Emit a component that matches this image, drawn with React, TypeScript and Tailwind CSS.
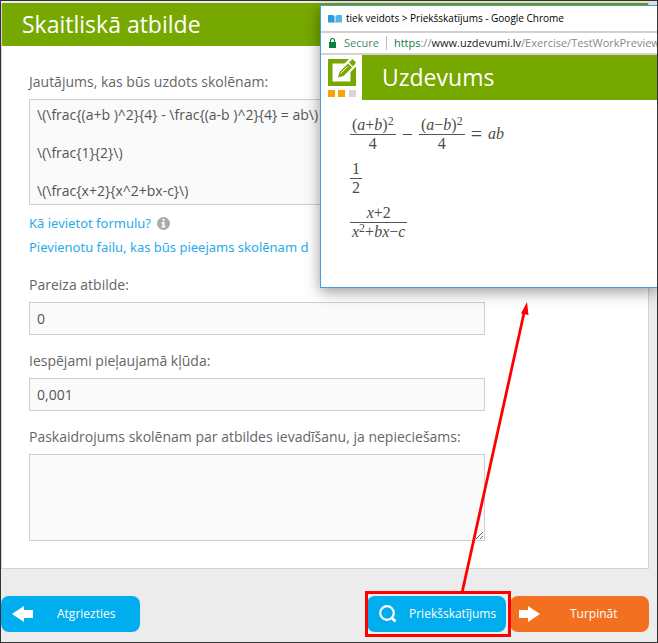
import { useState, type ReactNode } from 'react';

const QUESTION = `\\(\\frac{(a+b )^2}{4} - \\frac{(a-b )^2}{4} = ab\\)

\\(\\frac{1}{2}\\)

\\(\\frac{x+2}{x^2+bx-c}\\)`;

const FIELD = 'block w-full border border-[#cfcfcf] bg-[#fafafa] px-[7px] text-sm text-[#555] outline-none';
const BUTTON = 'flex h-9 w-[139px] items-center rounded-lg text-xs text-white';

function Frac({ top, bottom }: { top: ReactNode; bottom: ReactNode }) {
  return (
    <span className="inline-flex flex-col items-center">
      <span className="h-[19px] px-0.5 leading-[19px]">{top}</span>
      <span className="w-full border-t border-[#555]" />
      <span className="h-[18px] px-0.5 leading-[18px]">{bottom}</span>
    </span>
  );
}

function Square() {
  return <sup className="relative -top-[5px] text-xs leading-none align-baseline">2</sup>;
}

function Logo() {
  return (
    <svg width="28" height="38" viewBox="0 0 28 38" aria-hidden="true">
      <path d="M0 0h21l-4.500 4.500H4.500v18h18V13l5.500-5.500V27H0z" fill="#76a800" />
      <path d="M10 18.500l1.500-5.500L20 4.500l4 4L15.500 17z" fill="#76a800" />
      <path d="M21 3.500L24.500 0 28 3.500 25 7.500z" fill="#76a800" />
      <path d="M12.500 14.500l7-7" stroke="#fff" />
      <path d="M0 31h7v7H0zM10 31h7v7h-7z" fill="#f7a30a" />
      <path d="M21 31h7v7h-7z" fill="#d6d6d6" />
    </svg>
  );
}

function PreviewWindow() {
  return (
    <section className="absolute top-1 left-[319px] right-0 h-[283px] overflow-hidden border border-r-0 border-[#4a9bdc] bg-white shadow-[0_4px_14px_rgba(0,0,0,0.4)]">
      <div className="flex h-[25px] items-center gap-1 pl-[7px] text-[10px] text-black whitespace-nowrap">
        <svg className="shrink-0" width="14" height="10" viewBox="0 0 14 10" aria-hidden="true">
          <path d="M0 1h5l1.500 1v7L5 8.500H0z" fill="#2f9bdb" />
          <path d="M14 1H9L7.500 2v7L9 8.500h5z" fill="#58b4e6" />
        </svg>
        tiek veidots &gt; Priekšskatījums - Google Chrome
      </div>
      <div className="flex h-6 items-center border-y-2 border-[#d2d2d2] pl-2 text-[11px] whitespace-nowrap">
        <svg className="shrink-0" width="7" height="10" viewBox="0 0 7 10" aria-hidden="true">
          <path d="M1.500 4.500V2.500a2 2 0 0 1 4 0v2" fill="none" stroke="#0b8043" strokeWidth="1.200" />
          <path d="M0 4h7v6H0z" fill="#0b8043" />
        </svg>
        <span className="ml-2 text-[#3c8f60]">Secure</span>
        <span className="mx-[7px] h-3.5 w-px shrink-0 bg-[#bbb]" />
        <span className="text-[#888]">
          <span className="text-[#0b8043]">https</span>://<span className="text-[#222]">www.uzdevumi.lv</span>/Exercise/TestWorkPreview
        </span>
      </div>
      <div className="flex h-[45px]">
        <div className="w-[41px] pt-1 pl-[7px]"><Logo /></div>
        <h2 className="flex flex-1 items-center bg-[#76a800] pl-5 text-[23px] text-white">Uzdevums</h2>
      </div>
      <div className="flex flex-col items-start gap-1.5 pt-[15px] pl-[29px] font-['Liberation_Serif',serif] text-base text-[#4d4d45]">
        <div className="flex items-center gap-1.5">
          <Frac top={<>(<i>a</i>+<i>b</i>)<Square /></>} bottom="4" />
          <span className="text-xl leading-none">−</span>
          <Frac top={<>(<i>a</i>−<i>b</i>)<Square /></>} bottom="4" />
          <span className="text-xl leading-none">=</span>
          <i>ab</i>
        </div>
        <Frac top="1" bottom="2" />
        <Frac top={<><i>x</i>+2</>} bottom={<><i>x</i><Square />+<i>bx</i>−<i>c</i></>} />
      </div>
    </section>
  );
}

export default function App() {
  const [question, setQuestion] = useState(QUESTION);
  const [answer, setAnswer] = useState('0');
  const [tolerance, setTolerance] = useState('0,001');
  const [note, setNote] = useState('');

  return (
    <div className="relative min-h-screen overflow-hidden border border-[#333] bg-[#ececec] pt-0.5 font-['Open_Sans',sans-serif] text-[#666]">
      <main className="mr-2 border border-t-0 border-[#d2d2d2] bg-white">
        <h1 className="flex h-[43px] items-center bg-[#76a800] pl-5 text-[23px] text-white">Skaitliskā atbilde</h1>

        <form className="max-w-[483px] pt-[26px] pb-[27px] pl-[27px] text-sm leading-5">
          <label htmlFor="question" className="mb-[7px] block">Jautājums, kas būs uzdots skolēnam:</label>
          <textarea
            id="question"
            value={question}
            onChange={e => setQuestion(e.target.value)}
            className={`${FIELD} h-[106px] resize-none overflow-hidden py-[5px] leading-[19px]`}
          />
          <div className="mt-1.5 mb-4 font-['Noto_Sans',sans-serif] text-[13px] leading-6 text-[#29abe8] whitespace-nowrap">
            <div className="flex items-center gap-1.5">
              <a href="#formula">Kā ievietot formulu?</a>
              <svg width="13" height="13" viewBox="0 0 13 13" aria-hidden="true">
                <circle cx="6.500" cy="6.500" r="6.500" fill="#aaa" />
                <path d="M5.500 2h2v2h-2zM4.500 5h3v4h1v1.500h-4V9h1V6.500h-1z" fill="#fff" />
              </svg>
            </div>
            <a href="#file" className="block">Pievienotu failu, kas būs pieejams skolēnam d</a>
          </div>

          <label htmlFor="answer" className="mb-[7px] block">Pareiza atbilde:</label>
          <input id="answer" value={answer} onChange={e => setAnswer(e.target.value)} className={`${FIELD} mb-4 h-[33px]`} />

          <label htmlFor="tolerance" className="mb-[7px] block">Iespējami pieļaujamā kļūda:</label>
          <input id="tolerance" value={tolerance} onChange={e => setTolerance(e.target.value)} className={`${FIELD} mb-4 h-[33px]`} />

          <label htmlFor="note" className="mb-[7px] block whitespace-nowrap">
            Paskaidrojums skolēnam par atbildes ievadīšanu, ja nepieciešams:
          </label>
          <textarea id="note" value={note} onChange={e => setNote(e.target.value)} className={`${FIELD} h-[87px] resize py-1.5`} />
        </form>
      </main>

      <PreviewWindow />

      <footer className="mr-2 flex items-center gap-1 pt-[27px] pb-2.5">
        <button type="button" className={`${BUTTON} mr-auto bg-[#00aeef] pl-[11px]`}>
          <svg width="21" height="16" viewBox="0 0 21 16" fill="#fff" aria-hidden="true">
            <path d="M0 8l12-8v4h9v8h-9v4z" />
          </svg>
          <span className="ml-6">Atgriezties</span>
        </button>
        <div className="relative">
          <button type="button" className={`${BUTTON} bg-[#00aeef] pl-3`}>
            <svg width="18" height="18" viewBox="0 0 18 18" fill="none" stroke="#fff" aria-hidden="true">
              <circle cx="8" cy="8" r="6.800" strokeWidth="2.200" />
              <path d="M12.500 12.500l4 4" strokeWidth="2.800" />
            </svg>
            <span className="ml-3">Priekšskatījums</span>
          </button>
          {/* highlight and arrow up to the preview window */}
          <div className="pointer-events-none absolute -inset-y-[5px] -right-[5px] -left-0.5 border-[3px] border-[#f00]" />
          <svg className="pointer-events-none absolute bottom-[38px] left-[90px]" width="76" height="292" viewBox="0 0 76 292" aria-hidden="true">
            <path d="M5 291L67 11" stroke="#f00" strokeWidth="2.800" />
            <path d="M70 0l1.500 13-7.500-1.500z" fill="#f00" />
          </svg>
        </div>
        <button type="button" className={`${BUTTON} bg-[#f37021] pl-[9px]`}>
          <svg width="21" height="16" viewBox="0 0 21 16" fill="#fff" aria-hidden="true">
            <path d="M21 8L9 0v4H0v8h9v4z" />
          </svg>
          <span className="ml-[30px]">Turpināt</span>
        </button>
      </footer>
    </div>
  );
}
